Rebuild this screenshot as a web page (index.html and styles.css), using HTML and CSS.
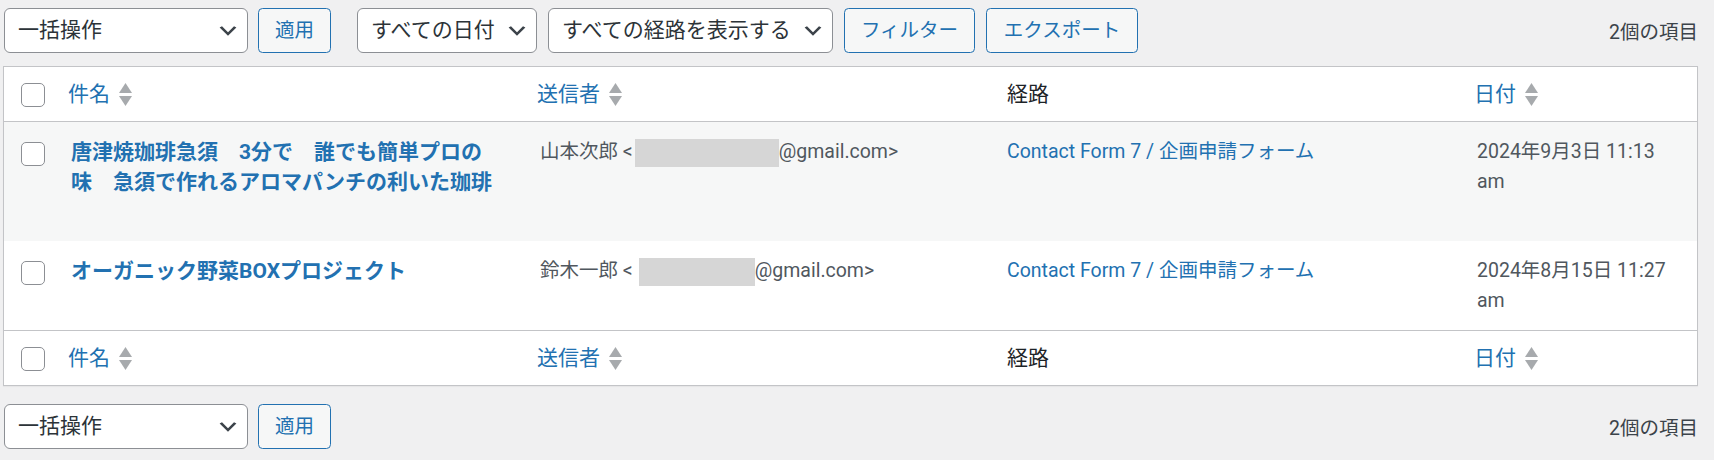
FILE: index.html
```html
<!DOCTYPE html>
<html lang="ja">
<head>
<meta charset="utf-8">
<title>受信メッセージ</title>
<link rel="stylesheet" href="styles.css">
</head>
<body>
<div class="wrap">
  <div class="tablenav tablenav-top">
    <div class="actions actions-bulk">
      <div class="select-wrap">
        <select class="select select-bulk"><option>一括操作</option></select>
        <svg class="chevron" viewBox="0 0 20 20" width="24" height="24"><path d="M5 6l5 5 5-5 2 1-7 7-7-7 2-1z"/></svg>
      </div>
      <button class="button" type="button">適用</button>
    </div>
    <div class="actions actions-filter">
      <div class="select-wrap">
        <select class="select select-date"><option>すべての日付</option></select>
        <svg class="chevron" viewBox="0 0 20 20" width="24" height="24"><path d="M5 6l5 5 5-5 2 1-7 7-7-7 2-1z"/></svg>
      </div>
      <div class="select-wrap">
        <select class="select select-channel"><option>すべての経路を表示する</option></select>
        <svg class="chevron" viewBox="0 0 20 20" width="24" height="24"><path d="M5 6l5 5 5-5 2 1-7 7-7-7 2-1z"/></svg>
      </div>
      <button class="button button-filter" type="button">フィルター</button>
      <button class="button button-export" type="button">エクスポート</button>
    </div>
    <div class="displaying-num">2個の項目</div>
  </div>

  <table class="list-table">
    <colgroup>
      <col class="col-check">
      <col class="col-title">
      <col class="col-from">
      <col class="col-channel">
      <col class="col-date">
    </colgroup>
    <thead>
      <tr>
        <th class="check-head"><input class="cb" type="checkbox"></th>
        <th class="head-cell sortable"><a class="sort-link" href="#">件名<svg class="sort-ind" width="13" height="23" viewBox="0 0 13 23"><path d="M6.5 0 13 10H0z"/><path d="M0 13h13l-6.5 10z"/></svg></a></th>
        <th class="head-cell sortable"><a class="sort-link" href="#">送信者<svg class="sort-ind" width="13" height="23" viewBox="0 0 13 23"><path d="M6.5 0 13 10H0z"/><path d="M0 13h13l-6.5 10z"/></svg></a></th>
        <th class="head-cell">経路</th>
        <th class="head-cell sortable"><a class="sort-link" href="#">日付<svg class="sort-ind" width="13" height="23" viewBox="0 0 13 23"><path d="M6.5 0 13 10H0z"/><path d="M0 13h13l-6.5 10z"/></svg></a></th>
      </tr>
    </thead>
    <tbody>
      <tr class="striped">
        <th class="check-body"><input class="cb" type="checkbox"></th>
        <td class="cell cell-title"><a class="row-title" href="#">唐津焼珈琲急須　3分で　誰でも簡単プロの味　急須で作れるアロマパンチの利いた珈琲</a></td>
        <td class="cell">山本次郎 &lt;<span class="redacted redacted-long"></span>@gmail.com&gt;</td>
        <td class="cell"><a class="link" href="#">Contact Form 7 / 企画申請フォーム</a></td>
        <td class="cell">2024年9月3日 11:13 am</td>
      </tr>
      <tr>
        <th class="check-body"><input class="cb" type="checkbox"></th>
        <td class="cell cell-title"><a class="row-title" href="#">オーガニック野菜BOXプロジェクト</a></td>
        <td class="cell">鈴木一郎 &lt;<span class="redacted redacted-short"></span>@gmail.com&gt;</td>
        <td class="cell"><a class="link" href="#">Contact Form 7 / 企画申請フォーム</a></td>
        <td class="cell">2024年8月15日 11:27 am</td>
      </tr>
    </tbody>
    <tfoot>
      <tr>
        <th class="check-head"><input class="cb" type="checkbox"></th>
        <th class="head-cell sortable"><a class="sort-link" href="#">件名<svg class="sort-ind" width="13" height="23" viewBox="0 0 13 23"><path d="M6.5 0 13 10H0z"/><path d="M0 13h13l-6.5 10z"/></svg></a></th>
        <th class="head-cell sortable"><a class="sort-link" href="#">送信者<svg class="sort-ind" width="13" height="23" viewBox="0 0 13 23"><path d="M6.5 0 13 10H0z"/><path d="M0 13h13l-6.5 10z"/></svg></a></th>
        <th class="head-cell">経路</th>
        <th class="head-cell sortable"><a class="sort-link" href="#">日付<svg class="sort-ind" width="13" height="23" viewBox="0 0 13 23"><path d="M6.5 0 13 10H0z"/><path d="M0 13h13l-6.5 10z"/></svg></a></th>
      </tr>
    </tfoot>
  </table>

  <div class="tablenav tablenav-bottom">
    <div class="actions actions-bulk">
      <div class="select-wrap">
        <select class="select select-bulk"><option>一括操作</option></select>
        <svg class="chevron" viewBox="0 0 20 20" width="24" height="24"><path d="M5 6l5 5 5-5 2 1-7 7-7-7 2-1z"/></svg>
      </div>
      <button class="button" type="button">適用</button>
    </div>
    <div class="displaying-num">2個の項目</div>
  </div>
</div>
</body>
</html>
```

FILE: styles.css
```css
* {
  box-sizing: border-box;
}

html,
body {
  margin: 0;
}

body {
  background: #f0f0f1;
  color: #3c434a;
  font-family: Roboto, "Noto Sans CJK JP", sans-serif;
  font-size: 19.5px;
}

.wrap {
  padding: 8px 16px 0 3px;
}

/* toolbars */
.tablenav {
  display: flex;
  align-items: center;
  height: 45px;
}

.tablenav-top {
  margin-bottom: 13px;
}

.tablenav-bottom {
  margin-top: 18px;
}

.actions {
  display: flex;
  align-items: center;
  gap: 12px;
}

.actions-bulk {
  margin-left: 1px;
  gap: 10px;
}

.actions-filter {
  margin-left: 26px;
  gap: 11px;
}

.button-filter {
  width: 131px;
}

.button-export {
  width: 152px;
  margin-left: 3px;
}

.select-wrap {
  position: relative;
  display: flex;
  flex: none;
}

.select {
  -webkit-appearance: none;
  appearance: none;
  height: 45px;
  margin: 0;
  padding: 0 36px 0 13px;
  border: 1px solid #8c8f94;
  border-radius: 6px;
  background: #fff;
  color: #2c3338;
  font-family: inherit;
  font-size: 21px;
  line-height: 43px;
}

.select-bulk {
  width: 244px;
}

.select-date {
  width: 180px;
}

.select-channel {
  width: 285px;
}

.chevron {
  position: absolute;
  right: 8px;
  top: 11px;
  fill: #3c434a;
  pointer-events: none;
}

.button {
  flex: none;
  height: 45px;
  margin: 0;
  padding: 0 8px;
  min-width: 73px;
  border: 1px solid #2271b1;
  border-radius: 4.5px;
  background: #f6f7f7;
  color: #2271b1;
  font-family: inherit;
  font-size: 19.5px;
  line-height: 43px;
  white-space: nowrap;
  text-align: center;
  cursor: pointer;
}

.displaying-num {
  margin-left: auto;
  color: #3c434a;
  font-size: 19.5px;
}

/* table */
.list-table {
  width: 100%;
  table-layout: fixed;
  border-collapse: separate;
  border-spacing: 0;
  background: #fff;
  border: 1px solid #c3c4c7;
  box-shadow: 0 1px 1px rgba(0, 0, 0, 0.04);
}

.col-check {
  width: 52px;
}

.col-title {
  width: 469px;
}

.col-from {
  width: 467px;
}

.col-channel {
  width: 470px;
}

.list-table th,
.list-table td {
  text-align: left;
  vertical-align: top;
  font-weight: 400;
}

.list-table thead th {
  border-bottom: 1px solid #c3c4c7;
}

.list-table tfoot th {
  border-top: 1px solid #c3c4c7;
}

.check-head {
  padding: 16px 0 0 17px;
}

.check-body {
  padding: 20px 0 0 17px;
}

.cb {
  -webkit-appearance: none;
  appearance: none;
  display: block;
  width: 24px;
  height: 24px;
  margin: 0;
  border: 1px solid #8c8f94;
  border-radius: 5px;
  background: #fff;
}

.head-cell {
  padding: 12px 15px;
  color: #1d2327;
  font-size: 21px;
  line-height: 30px;
}

.head-cell.sortable {
  padding: 0;
}

.sort-link {
  display: flex;
  align-items: center;
  gap: 9px;
  padding: 12px;
  color: #2271b1;
  text-decoration: none;
}

.sort-ind {
  fill: #a7aaad;
  flex: none;
}

.striped {
  background: #f6f7f7;
}

.cell {
  padding: 15px 15px 9px;
  color: #50575e;
  font-size: 19.5px;
  line-height: 30px;
}

.cell-title {
  padding-bottom: 43px;
}

.row-title {
  display: inline-block;
  max-width: 426px;
  color: #2271b1;
  font-size: 21px;
  font-weight: 700;
  text-decoration: none;
}

.link {
  color: #2271b1;
  text-decoration: none;
}

.redacted {
  display: inline-block;
  height: 28px;
  background: #d6d6d6;
  vertical-align: middle;
}

.redacted-long {
  width: 144px;
  margin-left: 2px;
}

.redacted-short {
  width: 116px;
  margin-left: 6px;
}
```
